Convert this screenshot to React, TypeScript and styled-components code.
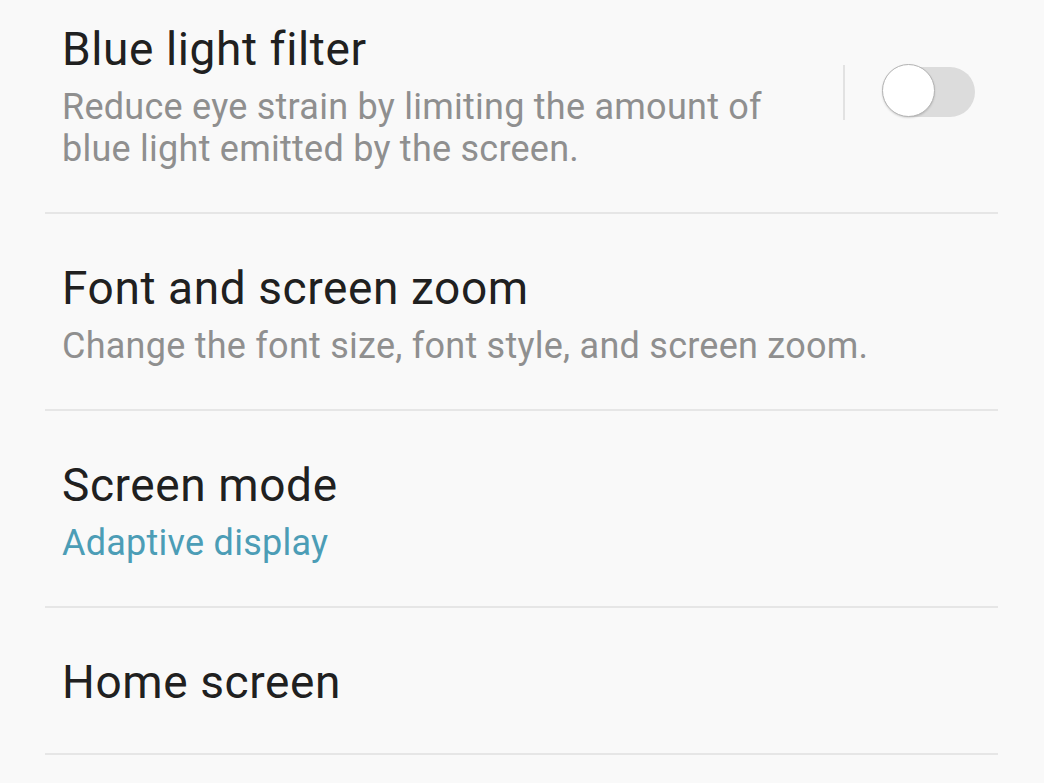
import styled, { createGlobalStyle } from 'styled-components';

interface Setting {
  title: string;
  summary?: string;
  accent?: boolean;
  toggle?: boolean;
}

const settings: Setting[] = [
  {
    title: 'Blue light filter',
    summary: 'Reduce eye strain by limiting the amount of blue light emitted by the screen.',
    toggle: true,
  },
  {
    title: 'Font and screen zoom',
    summary: 'Change the font size, font style, and screen zoom.',
  },
  { title: 'Screen mode', summary: 'Adaptive display', accent: true },
  { title: 'Home screen' },
];

const GlobalStyle = createGlobalStyle`
  html, body {
    margin: 0;
    padding: 0;
    background: #f9f9f9;
  }
  body {
    font-family: Roboto, 'Noto Sans', sans-serif;
    -webkit-font-smoothing: antialiased;
  }
`;

const List = styled.div`
  margin: 0 46px 0 45px;
`;

const Row = styled.div<{ $first: boolean; $single: boolean }>`
  display: flex;
  align-items: center;
  padding: ${(props) => (props.$first ? '22px' : '47px')} 23px
    ${(props) => (props.$single ? '44px' : '42px')} 17px;
  border-bottom: 2px solid #e6e6e6;
`;

const Texts = styled.div<{ $narrow: boolean }>`
  flex: 1;
  max-width: ${(props) => (props.$narrow ? '730px' : 'none')};
`;

const Title = styled.div`
  font-size: 46px;
  line-height: 54px;
  letter-spacing: 0.6px;
  color: #202020;
`;

const Summary = styled.div<{ $accent: boolean }>`
  margin-top: 10px;
  font-size: 36px;
  line-height: 42px;
  letter-spacing: 0.25px;
  color: ${(props) => (props.$accent ? '#4c9db6' : '#8f8f8f')};
`;

const Controls = styled.div`
  display: flex;
  align-items: center;
  margin-left: auto;
  margin-bottom: 8px;
  gap: 40px;
`;

const Separator = styled.div`
  width: 2px;
  height: 55px;
  background: #e2e2e2;
`;

const Track = styled.div`
  position: relative;
  width: 90px;
  height: 50px;
  border-radius: 25px;
  background: #dcdcdc;
`;

const Thumb = styled.div`
  position: absolute;
  left: -3px;
  top: -3px;
  width: 51px;
  height: 51px;
  border-radius: 50%;
  background: #ffffff;
  border: 1.5px solid #b3b3b3;
  box-shadow: 0 1px 2px rgba(0, 0, 0, 0.15);
`;

const App = () => {
  return (
    <>
      <GlobalStyle />
      <List>
        {settings.map((item, i) => (
          <Row key={item.title} $first={i === 0} $single={!item.summary}>
            <Texts $narrow={Boolean(item.toggle)}>
              <Title>{item.title}</Title>
              {item.summary && (
                <Summary $accent={Boolean(item.accent)}>{item.summary}</Summary>
              )}
            </Texts>
            {item.toggle && (
              <Controls>
                <Separator />
                <Track>
                  <Thumb />
                </Track>
              </Controls>
            )}
          </Row>
        ))}
      </List>
    </>
  );
};

export default App;
